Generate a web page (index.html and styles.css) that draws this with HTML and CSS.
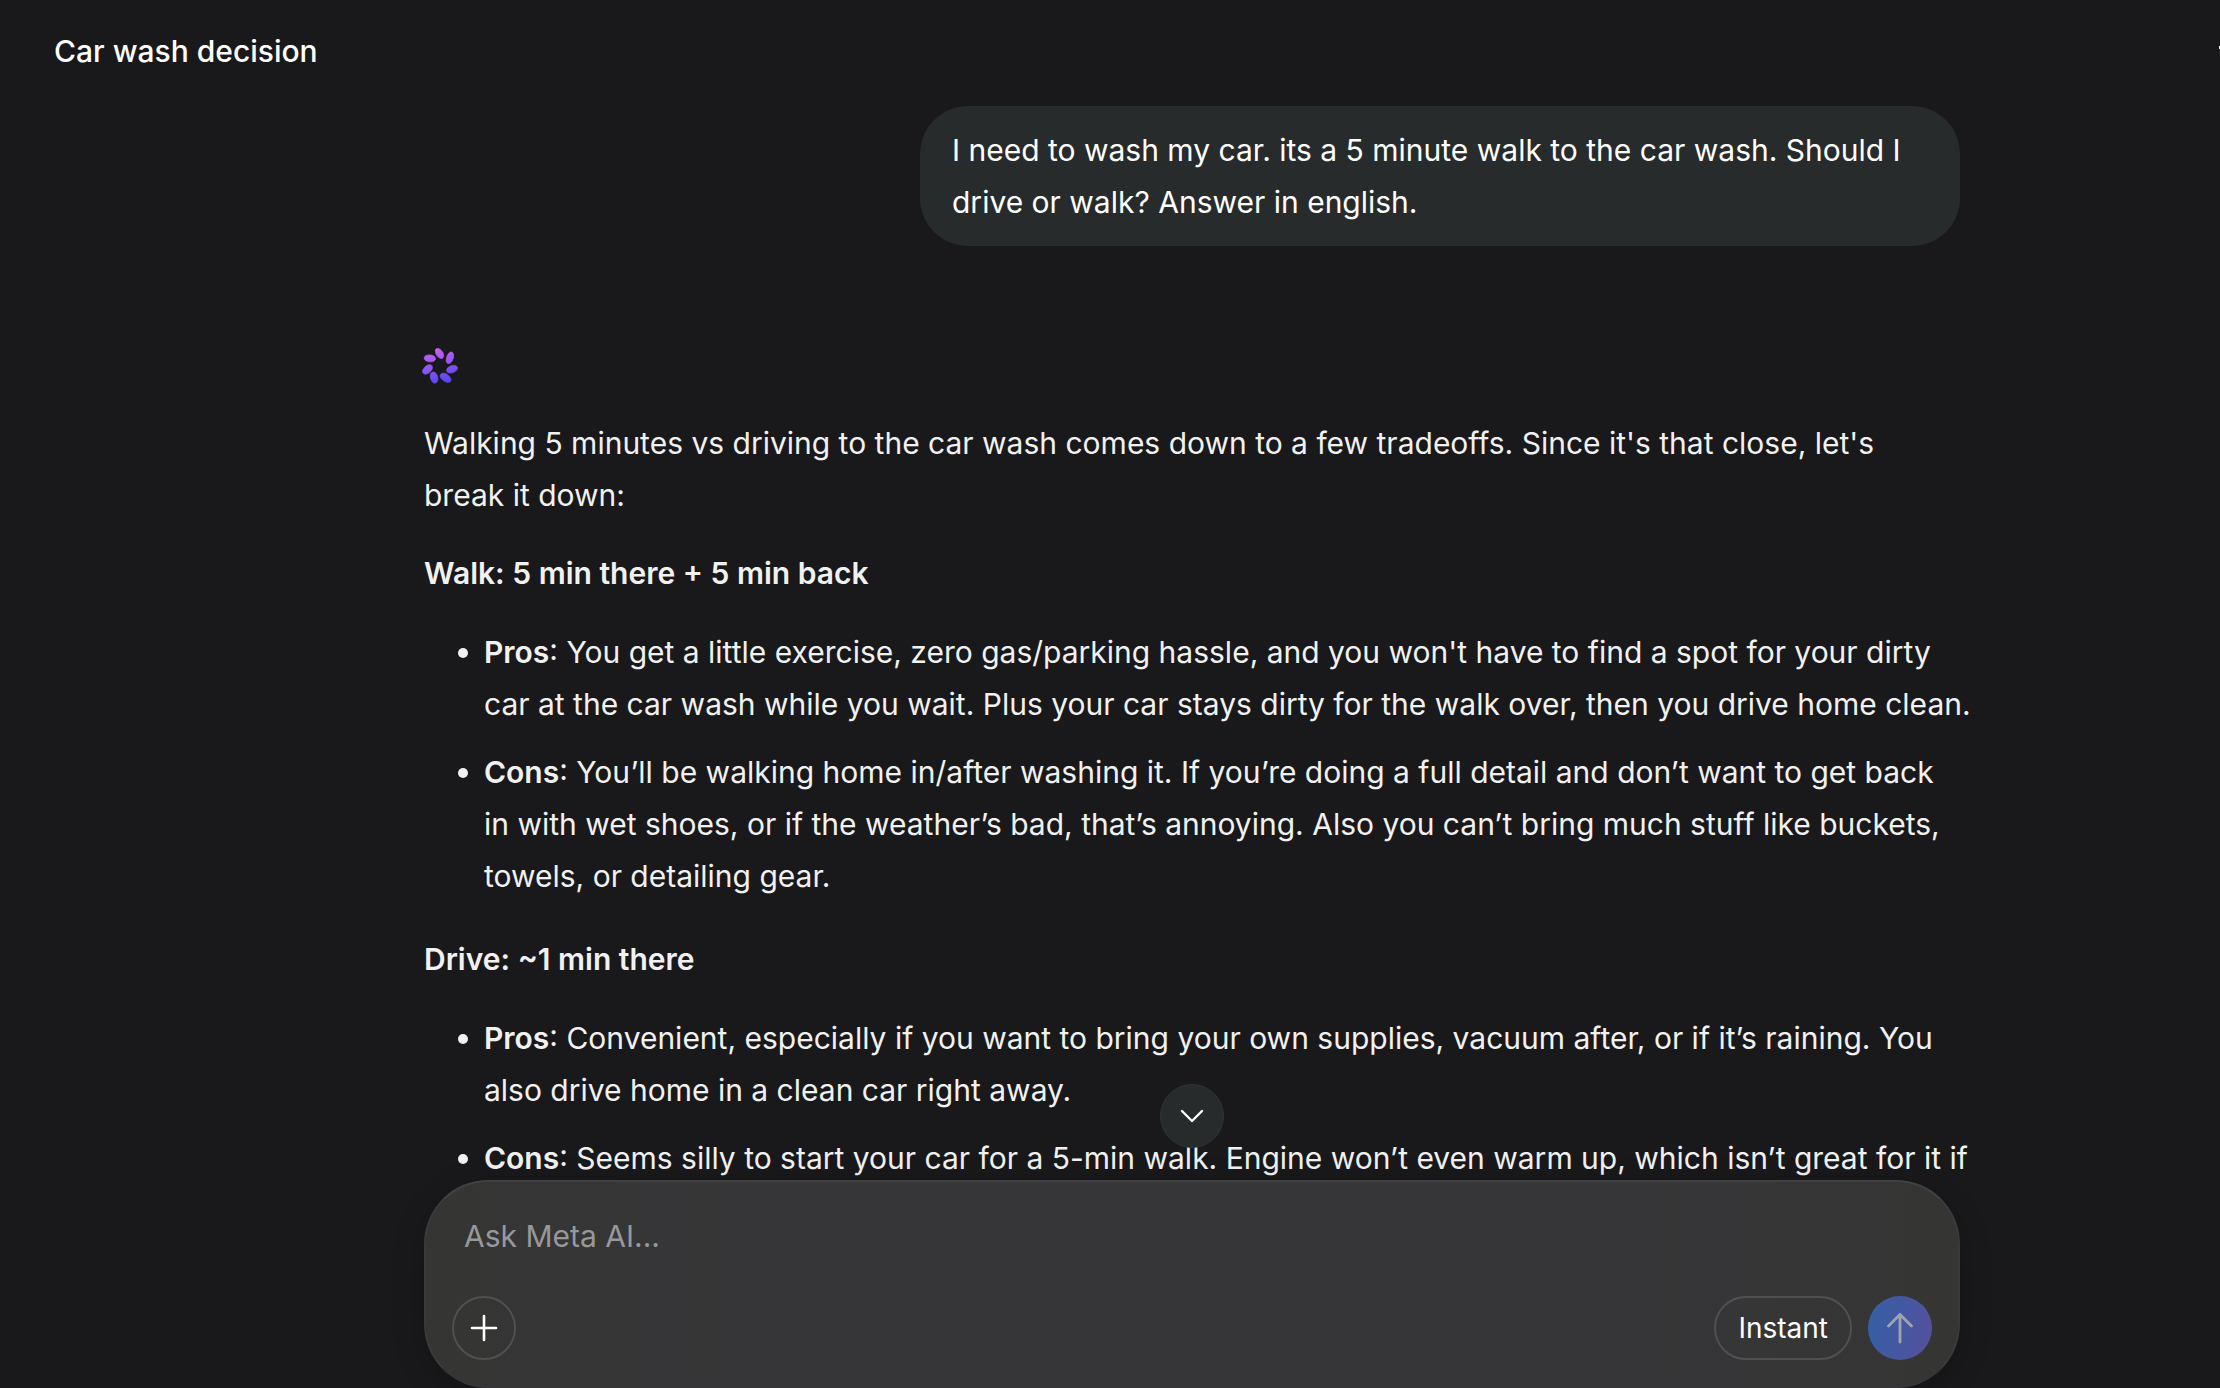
FILE: index.html
```html
<!DOCTYPE html>
<html lang="en">
<head>
<meta charset="utf-8">
<meta name="viewport" content="width=device-width, initial-scale=1">
<title>Car wash decision</title>
<link rel="stylesheet" href="styles.css">
</head>
<body>
<header class="topbar">
  <h1 class="topbar-title">Car wash decision</h1>
  <button class="menu-button" type="button" aria-label="More options">
    <svg viewBox="0 0 32 32" width="32" height="32" aria-hidden="true"><path d="M0 12.500h32M10 22.500h20" stroke="currentColor" stroke-width="3"/></svg>
  </button>
</header>

<main class="chat">
  <div class="column thread">
    <p class="bubble">I need to wash my car. its a 5 minute walk to the car wash. Should I<br>drive or walk? Answer in english.</p>

    <article class="answer">
      <svg class="logo" viewBox="0 0 36 36" width="36" height="36" aria-hidden="true">
        <defs>
          <linearGradient id="petals" gradientUnits="userSpaceOnUse" x1="12" y1="0" x2="22" y2="36">
            <stop offset="0" stop-color="#cf60f0"/>
            <stop offset="0.5" stop-color="#8d55f2"/>
            <stop offset="1" stop-color="#5243f4"/>
          </linearGradient>
        </defs>
        <g fill="url(#petals)" stroke="url(#petals)" stroke-width="0.8">
          <path d="M14.700 0.600C17.600-.600 22 4.600 21.700 7.900C21.300 11 18.600 11 16.500 9.300C13.800 7.100 11.900 1.800 14.700.600Z"/>
          <path d="M30 4.200C33 5.600 31.300 12.400 28.700 14.800C26.300 16.600 24.100 15.200 24.100 12.200C24.200 8.500 27 2.900 30 4.200Z"/>
          <path d="M35.400 19.600C36 23 30.300 25.600 27 24.900C23.900 24.100 24 21.300 26.300 19.300C29.200 16.900 34.800 16.500 35.400 19.600Z"/>
          <path d="M28.400 33.500C26.300 36 20 32.500 18.500 29.500C17.300 26.600 19.400 24.700 22.400 25.300C26 26 30.700 31 28.400 33.500Z"/>
          <path d="M13.500 35.100C10.300 36 7.900 30.400 8.400 26.900C9 23.800 11.700 23.200 13.900 25.300C16.400 27.900 16.700 34.200 13.500 35.100Z"/>
          <path d="M1.300 25.300C-1.100 22.800 3.300 17.700 6.600 16.800C9.700 16.100 11.100 18.500 10 21.300C8.600 24.800 3.500 27.600 1.300 25.300Z"/>
          <path d="M2.300 9.700C2.600 6.300 9.300 6.400 12.100 8.200C14.500 10 13.800 12.500 10.900 13.500C7.400 14.600 1.900 13 2.300 9.700Z"/>
        </g>
      </svg>

      <p class="lead">Walking 5 minutes vs driving to the car wash comes down to a few tradeoffs. Since it's that close, let's<br>break it down:</p>

      <h2 class="option">Walk: 5 min there + 5 min back</h2>
      <ul class="points">
        <li><strong>Pros</strong>: You get a little exercise, zero gas/parking hassle, and you won't have to find a spot for your dirty<br>car at the car wash while you wait. Plus your car stays dirty for the walk over, then you drive home clean.</li>
        <li><strong>Cons</strong>: You’ll be walking home in/after washing it. If you’re doing a full detail and don’t want to get back<br>in with wet shoes, or if the weather’s bad, that’s annoying. Also you can’t bring much stuff like buckets,<br>towels, or detailing gear.</li>
      </ul>

      <h2 class="option">Drive: ~1 min there</h2>
      <ul class="points">
        <li><strong>Pros</strong>: Convenient, especially if you want to bring your own supplies, vacuum after, or if it’s raining. You<br>also drive home in a clean car right away.</li>
        <li><strong>Cons</strong>: Seems silly to start your car for a 5-min walk. Engine won’t even warm up, which isn’t great for it if</li>
      </ul>
    </article>
  </div>
</main>

<form class="column composer">
  <button class="round scroll-down" type="button" aria-label="Scroll to bottom">
    <svg viewBox="0 0 24 24" width="24" height="24" fill="none" stroke="currentColor" stroke-width="2.400" stroke-linecap="round" stroke-linejoin="round" aria-hidden="true"><path d="M2 7l10 10L22 7"/></svg>
  </button>
  <textarea class="prompt" rows="1" placeholder="Ask Meta AI..." aria-label="Ask Meta AI"></textarea>
  <div class="tools">
    <button class="round outlined" type="button" aria-label="Add attachment">
      <svg viewBox="0 0 28 28" width="28" height="28" fill="none" stroke="currentColor" stroke-width="2.600" stroke-linecap="round" aria-hidden="true"><path d="M14 2v24M2 14h24"/></svg>
    </button>
    <button class="mode outlined" type="button">Instant</button>
    <button class="round send" type="submit" aria-label="Send">
      <svg viewBox="0 0 32 32" width="32" height="32" fill="none" stroke="currentColor" stroke-width="2.800" stroke-linecap="round" stroke-linejoin="round" aria-hidden="true"><path d="M16 30V2.500M4.500 14L16 2.500L27.500 14"/></svg>
    </button>
  </div>
</form>
</body>
</html>
```
FILE: styles.css
```css
* {
  box-sizing: border-box;
}

body {
  margin: 0;
  height: 100vh;
  overflow: hidden;
  display: flex;
  flex-direction: column;
  background: #19191b;
  color: #f1f1f1;
  font-family: Inter, "Liberation Sans", sans-serif;
  font-size: 30px;
  line-height: 52px;
}

h1,
h2,
p,
ul {
  margin: 0;
  padding: 0;
  font-size: inherit;
}

button {
  padding: 0;
  border: 0;
  background: none;
  color: #fff;
  font: inherit;
}

.topbar {
  flex: none;
  display: flex;
  align-items: center;
  justify-content: space-between;
  height: 102px;
  padding-left: 54px;
}

.topbar-title {
  color: #fff;
  font-weight: 500;
}

.menu-button {
  display: flex;
  margin-right: -31px;
}

/* The centre line sits right of the middle of the visible pane. */
.column {
  width: calc(100% - 684px);
  margin-left: 424px;
}

.chat {
  flex: 1;
  min-height: 0;
  overflow: hidden;
}

.thread {
  display: flex;
  flex-direction: column;
  padding-top: 4px;
}

.bubble {
  align-self: flex-end;
  width: 1040px;
  max-width: 100%;
  padding: 18px 32px;
  border-radius: 48px;
  background: #272b2c;
  color: #fff;
}

.answer {
  padding-top: 102px;
}

.logo {
  display: block;
  margin-left: -2px;
}

.lead {
  margin-top: 33px;
}

.option {
  margin-top: 26px;
  font-weight: 600;
}

.points {
  display: flex;
  flex-direction: column;
  gap: 16px;
  margin: 27px 0 31px;
  padding-left: 60px;
  list-style: none;
}

.points li {
  position: relative;
  white-space: nowrap;
}

.points li::before {
  content: "";
  position: absolute;
  left: -26px;
  top: 22px;
  width: 10px;
  height: 10px;
  border-radius: 50%;
  background: currentColor;
}

.points strong {
  font-weight: 600;
}

.composer {
  position: relative;
  flex: none;
  display: flex;
  flex-direction: column;
  gap: 34px;
  padding: 28px 26px 26px;
  border: 2px solid #414143;
  border-color: #414143 #3a3a3b #363638;
  border-radius: 64px;
  background: linear-gradient(90deg, #353534, #363638 20%, #363638 80%, #353534);
  box-shadow: 0 8px 32px rgba(0, 0, 0, 0.2);
}

.prompt {
  height: 52px;
  margin: 0;
  padding: 0 12px;
  border: 0;
  outline: 0;
  resize: none;
  background: none;
  color: #fff;
  font: inherit;
}

.prompt::placeholder {
  color: #98989a;
}

.tools {
  display: flex;
  align-items: center;
  gap: 16px;
}

.round {
  display: flex;
  align-items: center;
  justify-content: center;
  width: 64px;
  height: 64px;
  border-radius: 50%;
}

.outlined {
  border: 2px solid #505052;
}

.mode {
  height: 64px;
  margin-left: auto;
  padding: 0 22px;
  border-radius: 32px;
  font-size: 28px;
}

.send {
  background: linear-gradient(100deg, #3460a4, #4558a2 50%, #57509c);
  color: #9fa3b5;
}

.scroll-down {
  position: absolute;
  left: calc(50% - 32px);
  top: -98px;
  border: 1px solid #303536;
  background: #272b2c;
}
```
